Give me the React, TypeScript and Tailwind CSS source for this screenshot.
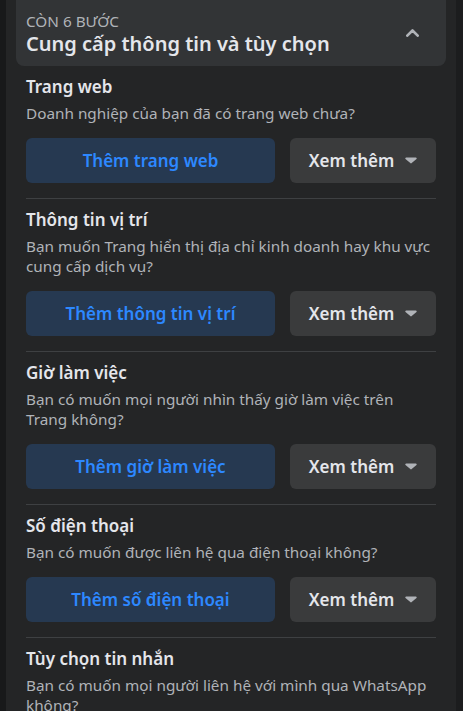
import React from "react";

const sections = [
  {
    title: "Trang web",
    desc: "Doanh nghiệp của bạn đã có trang web chưa?",
    action: "Thêm trang web",
  },
  {
    title: "Thông tin vị trí",
    desc: "Bạn muốn Trang hiển thị địa chỉ kinh doanh hay khu vực cung cấp dịch vụ?",
    action: "Thêm thông tin vị trí",
  },
  {
    title: "Giờ làm việc",
    desc: "Bạn có muốn mọi người nhìn thấy giờ làm việc trên Trang không?",
    action: "Thêm giờ làm việc",
  },
  {
    title: "Số điện thoại",
    desc: "Bạn có muốn được liên hệ qua điện thoại không?",
    action: "Thêm số điện thoại",
  },
  {
    title: "Tùy chọn tin nhắn",
    desc: "Bạn có muốn mọi người liên hệ với mình qua WhatsApp không?",
    action: null as string | null,
  },
];

function Caret() {
  return (
    <svg width="12" height="7" viewBox="0 0 12 7" className="shrink-0">
      <path d="M1.2 0.5h9.6c0.8 0 1.2 0.9 0.7 1.5L6.7 6.1c-0.4 0.4-1 0.4-1.4 0L0.5 2C0 1.4 0.4 0.5 1.2 0.5z" fill="#b0b3b8" />
    </svg>
  );
}

function ChevronUp() {
  return (
    <svg width="13" height="8" viewBox="0 0 13 8">
      <path d="M1.3 6.7 L6.5 1.5 L11.7 6.7" fill="none" stroke="#b0b3b8" strokeWidth="2.6" strokeLinecap="round" strokeLinejoin="round" />
    </svg>
  );
}

export default function App() {
  return (
    <div
      className="flex h-[711px] overflow-hidden bg-[#18191a]"
      style={{ fontFamily: '"Noto Sans", "Liberation Sans", sans-serif' }}
    >
      <div className="w-[6px] shrink-0 bg-[#18191a]" />
      <div className="flex-1 bg-[#242526] px-[10px]">
        <div className="flex items-center rounded-b-[8px] bg-[#323436] pl-[10px] pr-[16px] h-[66px]">
          <div className="flex-1 pt-[2px]">
            <div className="text-[15.3px] leading-[20px] text-[#b0b3b8] uppercase">Còn 6 bước</div>
            <div className="text-[20px] leading-[26px] font-semibold text-[#e4e6eb]">
              Cung cấp thông tin và tùy chọn
            </div>
          </div>
          <div className="flex h-[36px] w-[36px] items-center justify-center">
            <ChevronUp />
          </div>
        </div>
        <div className="px-[10px]">
          {sections.map((s, i) => (
            <div
              key={i}
              className={
                s.action
                  ? "border-b border-[#3e4042] pt-[11px] pb-[15px]"
                  : "pt-[11px]"
              }
            >
              <div className="text-[17px] leading-[20px] font-semibold text-[#e4e6eb]">{s.title}</div>
              <div className="mt-[6px] text-[15.3px] leading-[20px] text-[#b0b3b8]">{s.desc}</div>
              {s.action && (
                <div className="mt-[15px] flex gap-[15px]">
                  <div className="flex h-[45px] flex-1 items-center justify-center rounded-[6px] bg-[#263951] text-[17px] font-semibold text-[#2d88ff]">
                    {s.action}
                  </div>
                  <div className="flex h-[45px] w-[146px] items-center justify-center gap-[11px] rounded-[6px] bg-[#3a3b3c] text-[17px] font-semibold text-[#e4e6eb]">
                    <span>Xem thêm</span>
                    <Caret />
                  </div>
                </div>
              )}
            </div>
          ))}
        </div>
      </div>
      <div className="w-[7px] shrink-0 bg-[#1c1d1e]" />
    </div>
  );
}
